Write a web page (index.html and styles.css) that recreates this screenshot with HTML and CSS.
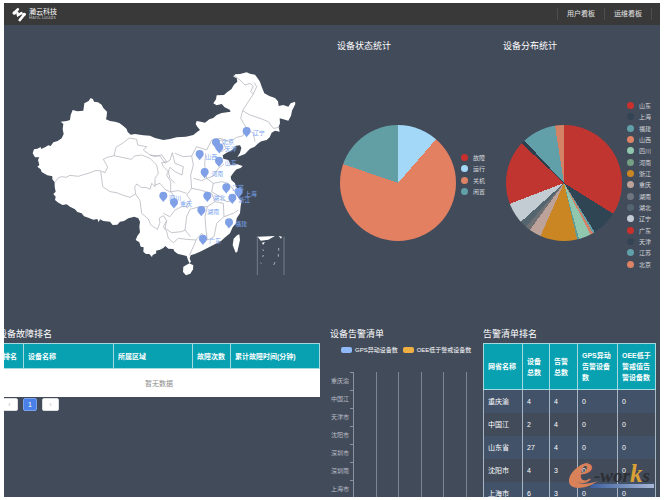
FILE: index.html
```html
<!DOCTYPE html>
<html lang="zh-CN">
<head>
    <meta charset="UTF-8">
    <meta name="viewport" content="width=device-width, initial-scale=1.0">
    <title>瀚云科技</title>
    <link rel="stylesheet" href="styles.css">
</head>
<body>
    <div class="dashboard">
        <header class="topbar">
            <div class="brand">
                <svg class="brand-icon" viewBox="0 0 40 42" aria-hidden="true">
                    <g fill="none" stroke="#fff" stroke-width="7" stroke-linecap="round">
                        <path d="M5 17 L17 6"/>
                        <path d="M15 15 L17 23 L27 17"/>
                        <path d="M22 37 L36 20"/>
                    </g>
                    <circle cx="7" cy="17" r="5" fill="#fff"/>
                    <circle cx="34" cy="21" r="5" fill="#fff"/>
                </svg>
                <div class="brand-text">
                    <span class="brand-name">瀚云科技</span>
                    <span class="brand-sub">HanClouds</span>
                </div>
            </div>
            <nav class="nav">
                <a href="#user">用户看板</a>
                <a href="#ops">运维看板</a>
            </nav>
        </header>

        <main>
            <div class="row row-top">
                <section class="map">
                    <svg viewBox="0 0 870 720" role="img" aria-label="设备地图">
                        <g fill="#fff">
                            <path d="M38 310 L42 298 52 296 62 291 64 297 75 292 85 286 92 288 100 277 113 273 125 265 131 252 128 238 130 222 122 215 140 213 150 210 152 195 158 180 172 184 190 182 193 160 206 153 212 144 219 148 222 155 234 157 245 164 250 174 261 185 260 198 258 208 270 213 285 215 298 219 310 228 320 237 323 246 332 254 345 252 370 256 390 257 405 264 430 270 450 267 470 262 498 260 520 255 532 245 540 240 532 230 527 222 530 213 542 215 555 218 568 208 580 204 590 195 605 189 632 185 629 179 614 172 605 162 590 166 580 160 588 148 590 136 612 135 622 126 634 118 642 104 652 95 650 84 640 80 646 73 660 72 680 67 690 71 705 74 712 83 720 95 725 110 733 130 748 138 765 144 774 154 776 168 790 165 805 170 812 160 825 155 826 162 816 182 813 197 805 212 790 208 779 205 780 220 776 230 779 245 765 242 755 248 749 262 740 270 724 274 715 280 704 290 690 296 675 312 652 321 660 308 664 294 660 286 648 287 636 300 620 308 608 316 610 326 625 330 632 345 652 343 668 348 662 354 650 358 642 366 632 380 634 390 645 400 648 410 658 420 652 430 654 442 665 452 662 468 660 490 650 505 648 520 638 532 630 550 612 565 604 572 590 580 574 588 555 598 540 605 524 612 512 616 509 625 513 636 508 639 504 630 500 618 485 614 474 612 463 604 460 597 445 596 436 588 430 594 420 599 408 602 409 610 398 615 396 621 388 612 378 612 370 605 371 592 362 590 358 577 347 570 352 558 360 547 358 530 360 515 355 505 343 500 325 505 312 513 300 515 292 524 278 525 270 515 250 513 240 508 236 517 232 507 220 509 205 503 192 499 185 490 172 486 165 478 150 470 140 463 128 465 115 458 105 450 107 440 100 432 107 425 104 410 104 397 97 388 97 379 82 376 65 366 62 358 52 350 58 345 54 330 58 322 45 322Z"/>
                            <path d="M658 553 L660 570 652 605 647 608 638 585 641 566 651 556Z"/>
                            <path d="M490 650 L508 640 520 646 519 658 511 671 498 676 489 666Z"/>
                            <path d="M713 560 L765 558 745 569 722 572Z"/>
                            <path d="M776 558 L786 560 783 566Z M726 578 L735 576 729 585Z"/>
                        </g>
                        <!-- province borders -->
                        <g fill="none" stroke="#a9abb3" stroke-width="2" stroke-linejoin="round">
                            <path d="M105 397 L115 383 125 380 138 382 150 376 175 379 190 374 205 370 225 362 240 362 255 368 263 352 257 340 250 328 262 322 282 317 288 292 310 278 328 264"/>
                            <path d="M282 317 L310 323 335 328 343 318 365 315 390 325 410 345 415 370 405 385 405 410 395 400 390 418 378 412 365 413 350 402 344 412 347 432 330 442 310 436 290 428 270 425 248 410 245 385 242 365"/>
                            <path d="M347 432 L360 452 365 490 385 507 392 524 400 530 412 538 420 518 417 505 430 497 440 512 430 530 440 545 445 565 460 578"/>
                            <path d="M328 264 L350 268 353 285 380 290 370 300 390 315 405 320 425 314 440 335 425 338 430 350 445 365 450 385 465 400"/>
                            <path d="M405 405 L420 400 435 418 455 428 465 445"/>
                            <path d="M390 315 L420 318 435 340 450 330 457 308 465 340 490 350 486 375 465 365 450 352 440 375 452 395 452 425 475 422 500 430"/>
                            <path d="M465 310 L490 320 515 318 530 290 560 300 575 270 600 265 630 275 650 262 668 258 680 235"/>
                            <path d="M515 318 L520 345 512 375 515 415 500 435 512 450 498 470 505 475"/>
                            <path d="M557 310 L554 345 560 385 545 392 520 385 M560 385 L580 378 595 355 612 342"/>
                            <path d="M515 415 L540 420 575 430 585 455 562 470 540 470 510 478 500 500 495 540 512 560"/>
                            <path d="M560 385 L580 400 575 425 600 440 620 455 640 452 M580 400 L605 395 625 400 645 425"/>
                            <path d="M585 455 L610 460 612 500 590 520 582 560 562 570 558 540 555 500 562 470"/>
                            <path d="M612 500 L640 490 655 480"/>
                            <path d="M430 490 L450 500 465 480 485 470 500 470 M440 512 L435 535 455 548 485 545 495 540"/>
                            <path d="M460 578 L475 565 500 568 528 570 520 590 508 616 M528 570 L545 550 562 570"/>
                            <path d="M640 75 L660 90 675 105 690 100 700 108 692 125 700 132 710 110 703 98 M700 132 L685 155 668 182 690 195 720 205 745 215 760 235 779 232"/>
                            <path d="M668 182 L662 205 680 235 700 250 705 275"/>
                            <path d="M585 290 L590 275 605 270 618 295 605 305Z"/>
                        </g>
                        <g fill="none" stroke="#8f98a5" stroke-width="2">
                            <path d="M712 675 V558 M792 560 V675"/>
                            <path stroke="#dfe3e8" d="M728 598 l3 5 M730 615 l-2 6 M722 638 l2 3 M776 594 v8 M775 612 v8 M765 636 l-4 9"/>
                        </g>
                        <defs>
                            <path id="pin" d="M0 19 C-4 11 -12 9 -12 0 A12 12 0 1 1 12 0 C12 9 4 11 0 19Z"/>
                        </defs>
                        <g fill="#7f9fe6">
                            <use href="#pin" x="680" y="243"/>
                            <use href="#pin" x="588" y="277"/>
                            <use href="#pin" x="598" y="292"/>
                            <use href="#pin" x="539" y="312"/>
                            <use href="#pin" x="597" y="332"/>
                            <use href="#pin" x="554" y="366"/>
                            <use href="#pin" x="619" y="412"/>
                            <use href="#pin" x="656" y="425"/>
                            <use href="#pin" x="637" y="443"/>
                            <use href="#pin" x="430" y="437"/>
                            <use href="#pin" x="462" y="457"/>
                            <use href="#pin" x="562" y="437"/>
                            <use href="#pin" x="544" y="480"/>
                            <use href="#pin" x="627" y="517"/>
                            <use href="#pin" x="549" y="566"/>
                        </g>
                        <g class="map-labels">
                            <text x="698" y="255">辽宁</text>
                            <text x="606" y="283">北京</text>
                            <text x="614" y="302">天津</text>
                            <text x="556" y="327">山西</text>
                            <text x="614" y="345">山东</text>
                            <text x="574" y="379">河南</text>
                            <text x="636" y="420">江苏</text>
                            <text x="674" y="439">上海</text>
                            <text x="655" y="457">浙江</text>
                            <text x="448" y="450">四川</text>
                            <text x="480" y="469">重庆</text>
                            <text x="580" y="450">湖北</text>
                            <text x="562" y="492">湖南</text>
                            <text x="645" y="528">福建</text>
                            <text x="567" y="579">广东</text>
                        </g>
                    </svg>
                </section>

                <section class="panel">
                    <h2>设备状态统计</h2>
                    <div class="pie-box">
                        <div class="pie pie-status"></div>
                        <ul class="legend legend-status">
                            <li class="c-red">故障</li>
                            <li class="c-sky">运行</li>
                            <li class="c-orange">关机</li>
                            <li class="c-teal">闲置</li>
                        </ul>
                    </div>
                </section>

                <section class="panel">
                    <h2>设备分布统计</h2>
                    <div class="pie-box">
                        <div class="pie pie-area"></div>
                        <ul class="legend legend-area">
                            <li class="c-red">山东</li>
                            <li class="c-navy">上海</li>
                            <li class="c-teal">福建</li>
                            <li class="c-orange">山西</li>
                            <li class="c-mint">四川</li>
                            <li class="c-green">河南</li>
                            <li class="c-gold">浙江</li>
                            <li class="c-pink">重庆</li>
                            <li class="c-gray">湖南</li>
                            <li class="c-slate">湖北</li>
                            <li class="c-light">辽宁</li>
                            <li class="c-red">广东</li>
                            <li class="c-navy">天津</li>
                            <li class="c-teal">江苏</li>
                            <li class="c-orange">北京</li>
                        </ul>
                    </div>
                </section>
            </div>

            <div class="row row-bottom">
                <section class="panel faults">
                    <h2>设备故障排名</h2>
                    <table class="fault-table">
                        <colgroup>
                            <col class="w-rank"><col class="w-name"><col class="w-area"><col class="w-count"><col>
                        </colgroup>
                        <thead>
                            <tr>
                                <th>排名</th>
                                <th>设备名称</th>
                                <th>所属区域</th>
                                <th>故障次数</th>
                                <th>累计故障时间(分钟)</th>
                            </tr>
                        </thead>
                        <tbody>
                            <tr><td colspan="5">暂无数据</td></tr>
                        </tbody>
                    </table>
                    <div class="pager">
                        <button type="button">‹</button>
                        <button type="button" class="active">1</button>
                        <button type="button">›</button>
                    </div>
                </section>

                <section class="panel">
                    <h2>设备告警清单</h2>
                    <div class="bar-legend">
                        <span class="key key-gps">GPS异动设备数</span>
                        <span class="key key-oee">OEE低于警戒设备数</span>
                    </div>
                    <div class="bar-chart">
                        <ul class="axis">
                            <li>重庆渝</li>
                            <li>中国江</li>
                            <li>天津市</li>
                            <li>沈阳市</li>
                            <li>深圳市</li>
                            <li>深圳南</li>
                            <li>上海市</li>
                        </ul>
                        <div class="plot">
                            <span></span><span></span><span></span><span></span><span></span>
                        </div>
                    </div>
                </section>

                <section class="panel">
                    <h2>告警清单排名</h2>
                    <table class="alarm-table">
                        <colgroup>
                            <col class="w-province"><col class="w-total"><col class="w-alarm"><col class="w-gps"><col>
                        </colgroup>
                        <thead>
                            <tr>
                                <th>网省名称</th>
                                <th>设备总数</th>
                                <th>告警总数</th>
                                <th>GPS异动告警设备数</th>
                                <th>OEE低于警戒值告警设备数</th>
                            </tr>
                        </thead>
                        <tbody>
                            <tr><td>重庆渝</td><td>4</td><td>4</td><td>0</td><td>0</td></tr>
                            <tr><td>中国江</td><td>2</td><td>4</td><td>0</td><td>0</td></tr>
                            <tr><td>山东省</td><td>27</td><td>4</td><td>0</td><td>0</td></tr>
                            <tr><td>沈阳市</td><td>4</td><td>3</td><td>0</td><td>0</td></tr>
                            <tr><td>上海市</td><td>6</td><td>3</td><td>0</td><td>0</td></tr>
                        </tbody>
                    </table>
                </section>
            </div>
        </main>

        <svg class="watermark" viewBox="0 0 92 32" role="img" aria-label="e-works">
            <defs>
                <linearGradient id="bar">
                    <stop offset="0" stop-color="#3b5f9e"/>
                    <stop offset="1" stop-color="#a9b8d6"/>
                </linearGradient>
            </defs>
            <path d="M26 23 H88 V27 H24Z" fill="url(#bar)"/>
            <path d="M24 1 C10 4 2 14 3 21 C4 29 19 29 32 20 C21 24 11 24 11 18 C11 11 16 5 24 1Z" fill="#d9825a"/>
            <text class="mark-e" x="8" y="22">e</text>
            <text class="mark-works" x="28" y="21">-wor<tspan class="mark-k">k</tspan>s</text>
        </svg>
    </div>
</body>
</html>
```
FILE: styles.css
```css
* {
    box-sizing: border-box;
}
body {
    margin: 0;
    padding: 3px 4px;
    background: #fff;
    font-family: "Liberation Sans", "Noto Sans CJK SC", sans-serif;
    font-size: 7px;
    color: #fff;
}
ul {
    list-style: none;
    margin: 0;
    padding: 0;
}
.dashboard {
    position: relative;
    height: calc(100vh - 6px);
    overflow: hidden;
    background: #424b5a;
}

/* top bar */
.topbar {
    display: flex;
    justify-content: space-between;
    align-items: center;
    height: 22px;
    padding: 0 8px;
    background: #393939;
}
.brand {
    display: flex;
    align-items: center;
    gap: 3px;
}
.brand-icon {
    width: 14px;
    height: 15px;
}
.brand-text {
    display: flex;
    flex-direction: column;
}
.brand-name {
    line-height: 8px;
}
.brand-sub {
    font-family: "Liberation Mono", monospace;
    font-size: 5px;
    line-height: 5px;
    color: #bbb;
}
.nav {
    display: flex;
}
.nav a {
    padding: 0 9px;
    line-height: 12px;
    color: #e6e6e6;
    text-decoration: none;
    border-left: 1px solid #4d4d4d;
}
.nav a:last-child {
    border-right: 1px solid #4d4d4d;
}

/* rows */
.row {
    display: grid;
}
.row-top {
    grid-template-columns: 333fr 166fr 157fr;
    height: 302px;
    padding-top: 14px;
}
.row-bottom {
    grid-template-columns: 326fr 153fr 177fr;
}
.map {
    padding: 11px 27px 0 16px;
}
.map svg {
    display: block;
    width: 100%;
}
.map-labels {
    font-size: 18px;
    fill: #7ba6f0;
}
h2 {
    margin: 0;
    font-size: 9px;
    font-weight: normal;
    line-height: 14px;
}

/* pies */
.pie-box {
    display: flex;
    align-items: flex-start;
    gap: 5px;
    padding: 47px 0 0 3px;
}
.pie {
    width: 116px;
    height: 116px;
    margin-top: 25px;
    border-radius: 50%;
}
.pie-status {
    background: conic-gradient(#a3d8f8 0 41deg, #e38062 41deg 289deg, #629fa5 289deg);
}
.pie-area {
    background: conic-gradient(
        #c13531 0 122deg,
        #2f4554 122deg 148deg,
        #61a0a8 148deg 150deg,
        #d48265 150deg 153deg,
        #91c7ae 153deg 165deg,
        #5f9c95 165deg 167deg,
        #ca8622 167deg 204deg,
        #bda29a 204deg 216deg,
        #6e7074 216deg 221deg,
        #546570 221deg 228deg,
        #c4ccd3 228deg 249deg,
        #c13531 249deg 313deg,
        #2f3f4e 313deg 317deg,
        #61a0a8 317deg 351deg,
        #d48265 351deg
    );
}
.legend {
    display: grid;
    grid-auto-rows: 1fr;
    font-size: 6px;
    color: #d5d8dc;
}
.legend li {
    display: flex;
    align-items: center;
    gap: 5px;
}
.legend li::before {
    content: "";
    width: 7px;
    height: 7px;
    border-radius: 50%;
    background: currentColor;
}
.legend-status {
    height: 45px;
    margin-top: 52px;
}
.legend-area {
    height: 170px;
}
.legend .c-red::before { background: #c9302d; }
.legend .c-sky::before { background: #a3d8f8; }
.legend .c-orange::before { background: #dc8265; }
.legend .c-teal::before { background: #61a0a8; }
.legend .c-navy::before { background: #344454; }
.legend .c-mint::before { background: #91c7ae; }
.legend .c-green::before { background: #749f83; }
.legend .c-gold::before { background: #ca8622; }
.legend .c-pink::before { background: #bda29a; }
.legend .c-gray::before { background: #6e7680; }
.legend .c-slate::before { background: #546570; }
.legend .c-light::before { background: #c4ccd8; }

/* tables */
table {
    border-collapse: collapse;
    table-layout: fixed;
    width: 100%;
    margin-top: 2px;
}
th {
    padding: 0 4px;
    background: #08a1b1;
    border: 1px solid #a5d9df;
    text-align: left;
    line-height: 11px;
}
.faults {
    margin: 0 10px 0 -6px;
}
.fault-table th {
    height: 25px;
}
.fault-table td {
    height: 28px;
    background: #fff;
    color: #8b8b8b;
    text-align: center;
}
.w-rank { width: 25px; }
.w-name { width: 90px; }
.w-area { width: 79px; }
.w-count { width: 38px; }
.pager {
    display: flex;
    gap: 5px;
    margin-top: 1px;
    padding-left: 3px;
}
.pager button {
    width: 17px;
    height: 13px;
    padding: 0;
    border: 1px solid #ddd;
    border-radius: 2px;
    background: #fff;
    color: #bbb;
    font-family: inherit;
    font-size: 7px;
    line-height: 11px;
}
.pager .active {
    width: 14px;
    background: #4a80e8;
    border-color: #79a1ee;
    color: #fff;
}

.alarm-table {
    width: calc(100% - 4px);
}
.alarm-table th {
    height: 46px;
}
.alarm-table td {
    height: 23px;
    padding: 0 4px;
    border-left: 1px solid #a9b4c2;
    border-right: 1px solid #a9b4c2;
}
.alarm-table tbody tr:nth-child(odd) {
    background: #425269;
}
.w-province { width: 39px; }
.w-total { width: 27px; }
.w-alarm { width: 28px; }
.w-gps { width: 40px; }

/* alarm chart */
.bar-legend {
    display: flex;
    gap: 5px;
    padding: 3px 0 0 11px;
    font-size: 6px;
    line-height: 12px;
}
.key {
    display: flex;
    align-items: center;
    gap: 3px;
    white-space: nowrap;
}
.key::before {
    content: "";
    width: 11px;
    height: 6px;
    border-radius: 2px;
}
.key-gps::before { background: #8fbaf7; }
.key-oee::before { background: #efb041; }
.bar-chart {
    display: flex;
    padding: 16px 16px 0 0;
}
.axis {
    width: 24px;
    font-size: 6px;
    color: #b9bec6;
    border-right: 1px solid #8b929d;
}
.axis li {
    height: 18px;
    padding-right: 4px;
    line-height: 18px;
    text-align: right;
    background: linear-gradient(#8b929d, #8b929d) right top / 3px 1px no-repeat;
}
.plot {
    flex: 1;
    display: flex;
}
.plot span {
    flex: 1;
    border-right: 1px solid #7d8591;
}

.watermark {
    position: absolute;
    right: 2px;
    bottom: 4px;
    width: 92px;
    height: 32px;
}
.mark-e {
    font: italic bold 42px "Liberation Serif", serif;
    fill: #d9825a;
}
.mark-works {
    font: italic bold 19px "Liberation Serif", serif;
    fill: #2c2e34;
}
.mark-k {
    font-size: 25px;
    fill: #d9a035;
}
```
